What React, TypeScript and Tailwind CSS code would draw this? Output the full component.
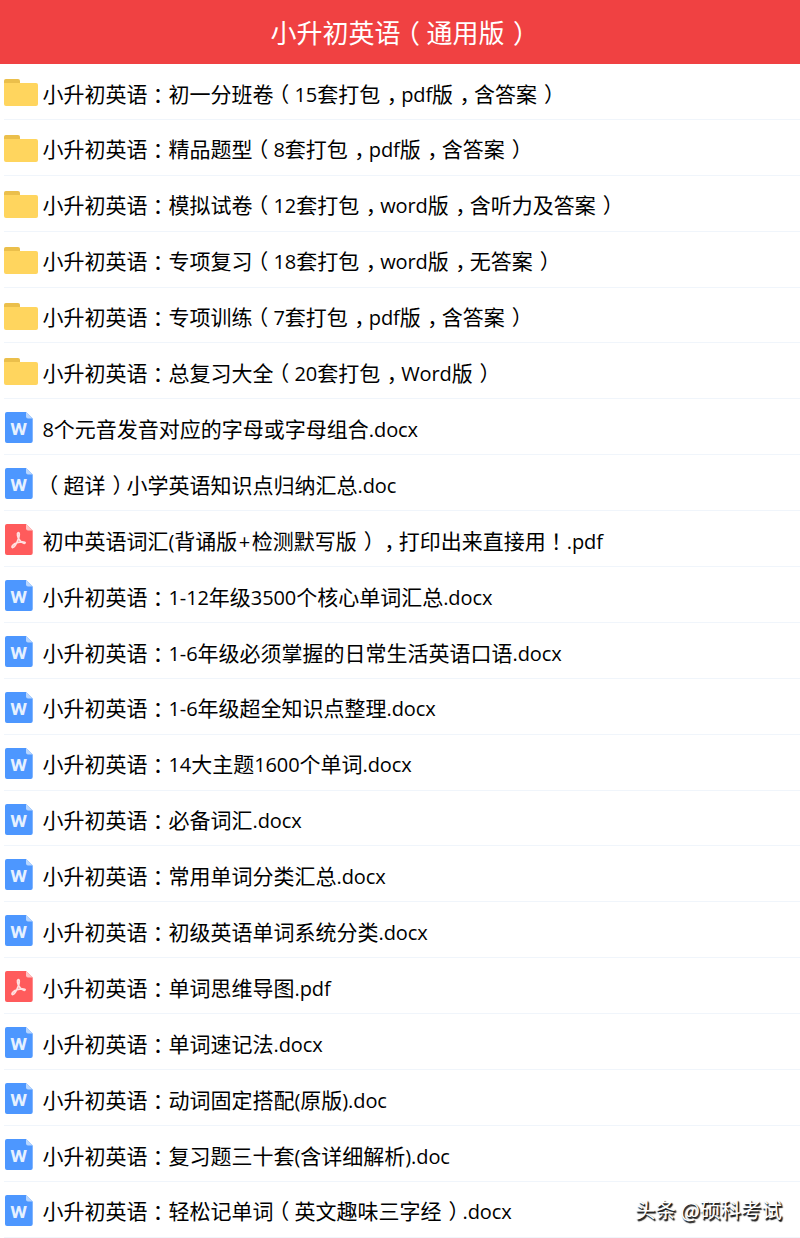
import React from "react";

type Kind = "folder" | "word" | "pdf";

const files: { kind: Kind; name: string }[] = [
  { kind: "folder", name: "小升初英语：初一分班卷（15套打包，pdf版，含答案）" },
  { kind: "folder", name: "小升初英语：精品题型（8套打包，pdf版，含答案）" },
  { kind: "folder", name: "小升初英语：模拟试卷（12套打包，word版，含听力及答案）" },
  { kind: "folder", name: "小升初英语：专项复习（18套打包，word版，无答案）" },
  { kind: "folder", name: "小升初英语：专项训练（7套打包，pdf版，含答案）" },
  { kind: "folder", name: "小升初英语：总复习大全（20套打包，Word版）" },
  { kind: "word", name: "8个元音发音对应的字母或字母组合.docx" },
  { kind: "word", name: "（超详）小学英语知识点归纳汇总.doc" },
  { kind: "pdf", name: "初中英语词汇(背诵版+检测默写版），打印出来直接用！.pdf" },
  { kind: "word", name: "小升初英语：1-12年级3500个核心单词汇总.docx" },
  { kind: "word", name: "小升初英语：1-6年级必须掌握的日常生活英语口语.docx" },
  { kind: "word", name: "小升初英语：1-6年级超全知识点整理.docx" },
  { kind: "word", name: "小升初英语：14大主题1600个单词.docx" },
  { kind: "word", name: "小升初英语：必备词汇.docx" },
  { kind: "word", name: "小升初英语：常用单词分类汇总.docx" },
  { kind: "word", name: "小升初英语：初级英语单词系统分类.docx" },
  { kind: "pdf", name: "小升初英语：单词思维导图.pdf" },
  { kind: "word", name: "小升初英语：单词速记法.docx" },
  { kind: "word", name: "小升初英语：动词固定搭配(原版).doc" },
  { kind: "word", name: "小升初英语：复习题三十套(含详细解析).doc" },
  { kind: "word", name: "小升初英语：轻松记单词（英文趣味三字经）.docx" },
];

// Full-width punctuation uses its half-width form, placed in a one-em cell.
const punctuation: Record<string, string> = {
  "（": "inline-block w-[1em] text-center [font-feature-settings:'halt']",
  "）": "inline-block w-[1em] pl-[0.16em] text-center [font-feature-settings:'halt']",
  "：": "inline-block w-[1em] text-center [font-feature-settings:'halt']",
  "，": "inline-block w-[1em] pl-[0.12em] text-center [font-feature-settings:'halt']",
  "！": "inline-block w-[1em] text-center [font-feature-settings:'halt']",
};

function Label({ text }: { text: string }) {
  const parts = text.match(/\+|[\x21-\x2a\x2c-\x7e]+|[（）：，！]|[^\x21-\x7e（）：，！]+/g) ?? [];
  return (
    <>
      {parts.map((part, i) => {
        if (punctuation[part]) {
          return <span key={i} className={punctuation[part]}>{part}</span>;
        }
        if (part === "+") {
          return <span key={i} className="px-[1.5px] font-['Open_Sans'] text-[20px]">+</span>;
        }
        if (/^[\x21-\x7e]/.test(part)) {
          return <span key={i} className="font-['Open_Sans'] text-[20px] tracking-[-0.1px]">{part}</span>;
        }
        return <span key={i}>{part}</span>;
      })}
    </>
  );
}

function FolderIcon() {
  return (
    <svg className="mt-[15px] ml-1 block h-[27px] w-[34px]" viewBox="0 0 34 27">
      <path d="M0 6V1.8Q0 0 1.8 0H14Q16 0 16 2V6Z" fill="#ebbf4b" />
      <path d="M0 4H32Q34 4 34 6V25Q34 27 32 27H2Q0 27 0 25Z" fill="#ffd55e" />
    </svg>
  );
}

function DocIcon({ kind }: { kind: "word" | "pdf" }) {
  const word = kind === "word";
  return (
    <svg className="mt-[13px] ml-[5px] block h-[31px] w-7" viewBox="0 0 28 31">
      <path
        d="M2 0H21L27.7 6.5V29Q27.7 31 25.7 31H2Q0 31 0 29V2Q0 0 2 0Z"
        fill={word ? "#4d97ff" : "#ff5b5c"}
      />
      <path d="M21 0L27.7 6.5H23Q21 6.5 21 4.5Z" fill={word ? "#b8d6ff" : "#ffc4c4"} />
      {word ? (
        <text
          x="5.3"
          y="22.8"
          textLength="16.8"
          lengthAdjust="spacingAndGlyphs"
          fill="#e6f1ff"
          className="font-['Roboto'] text-[17px] font-bold"
        >
          W
        </text>
      ) : (
        <path
          d="M13 8.7C14.8 8.2 14.5 12 13.3 15C12 18.5 9.5 23.5 7.6 23.6C5.7 23 8.5 19.8 12 18.8C15.5 17.7 20 17.5 20.2 18.8C19.5 20.5 15.5 17.8 14 15.3C12.6 13 11.8 9.3 13 8.7Z"
          fill="none"
          stroke="#ffe0e0"
          strokeWidth="1.7"
          strokeLinejoin="round"
        />
      )}
    </svg>
  );
}

export default function App() {
  return (
    <main
      lang="zh-CN"
      className="flex h-[1238px] w-[800px] flex-col overflow-hidden bg-white font-['Noto_Sans_CJK_SC',sans-serif] text-black"
    >
      <header className="flex h-16 shrink-0 items-center justify-center bg-[#f04142] pb-px pl-px text-[26px] leading-none whitespace-nowrap text-white">
        <h1>
          <Label text="小升初英语（通用版）" />
        </h1>
      </header>
      <ul className="relative">
        {files.map((file) => (
          <li key={file.name} className="flex h-[55.9px]">
            <div className="w-[43px] shrink-0">
              {file.kind === "folder" ? <FolderIcon /> : <DocIcon kind={file.kind} />}
            </div>
            <div className="-ml-[39px] flex-1 border-b border-[#f0f5fb] pt-[12.6px] pl-[38.5px] text-[21px] leading-[32px] whitespace-nowrap">
              <Label text={file.name} />
            </div>
          </li>
        ))}
        <li className="absolute right-[18px] bottom-[14px] text-[20.5px] leading-[30px] whitespace-nowrap text-white [text-shadow:1px_1px_1px_#111,1.5px_1.5px_1px_#222]">
          头条 @硕科考试
        </li>
      </ul>
    </main>
  );
}
